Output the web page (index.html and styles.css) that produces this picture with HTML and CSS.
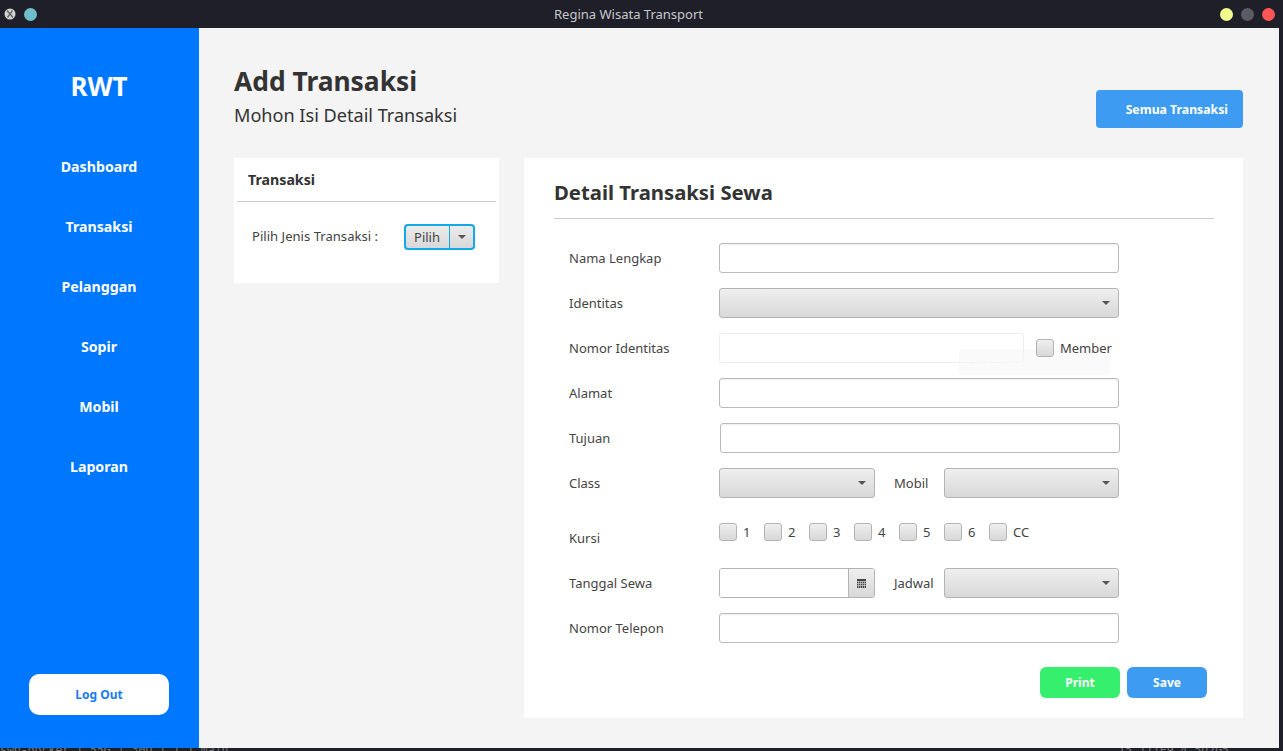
FILE: index.html
```html
<!DOCTYPE html>
<html lang="en">
<head>
  <meta charset="UTF-8">
  <title>Regina Wisata Transport</title>
  <link rel="stylesheet" href="styles.css">
</head>
<body>
  <div class="window">
    <header class="titlebar">
      <div class="title-left">
        <span class="app-icon">
          <svg width="12" height="12" viewBox="0 0 12 12">
            <circle cx="6" cy="6" r="5.5" fill="#d2d2d2"/>
            <path d="M3 2.5 L9 9.5 M8.5 2.5 L3.5 9.5" stroke="#666" stroke-width="1.4"/>
          </svg>
        </span>
        <span class="dot dot-teal"></span>
      </div>
      <div class="window-title">Regina Wisata Transport</div>
      <div class="title-right">
        <span class="dot dot-yellow"></span>
        <span class="dot dot-grey"></span>
        <span class="dot dot-red"></span>
      </div>
    </header>

    <div class="app">
      <aside class="sidebar">
        <div class="brand">RWT</div>
        <nav class="nav">
          <a class="nav-item">Dashboard</a>
          <a class="nav-item">Transaksi</a>
          <a class="nav-item">Pelanggan</a>
          <a class="nav-item">Sopir</a>
          <a class="nav-item">Mobil</a>
          <a class="nav-item">Laporan</a>
        </nav>
        <button class="logout">Log Out</button>
      </aside>

      <main class="main">
        <div class="page-head">
          <div class="page-heading">
            <h1 class="page-title">Add Transaksi</h1>
            <p class="page-sub">Mohon Isi Detail Transaksi</p>
          </div>
          <button class="btn btn-blue btn-all">Semua Transaksi</button>
        </div>

        <div class="content">
          <section class="side-card">
            <h3 class="side-title">Transaksi</h3>
            <div class="side-row">
              <span class="label">Pilih Jenis Transaksi :</span>
              <div class="split-btn">
                <span class="split-text">Pilih</span>
                <span class="split-arrow"><i class="arrow"></i></span>
              </div>
            </div>
          </section>

          <section class="form-card">
            <h2 class="form-title">Detail Transaksi Sewa</h2>
            <div class="form">
              <div class="row">
                <span class="label">Nama Lengkap</span>
                <div class="input grow"></div>
              </div>
              <div class="row">
                <span class="label">Identitas</span>
                <div class="combo grow"><i class="arrow"></i></div>
              </div>
              <div class="row">
                <span class="label">Nomor Identitas</span>
                <div class="input input-faded"></div>
                <label class="check check-member"><i class="box"></i>Member</label>
              </div>
              <div class="row">
                <span class="label">Alamat</span>
                <div class="input grow"></div>
              </div>
              <div class="row">
                <span class="label">Tujuan</span>
                <div class="input grow input-shift"></div>
              </div>
              <div class="row">
                <span class="label">Class</span>
                <div class="combo combo-small"><i class="arrow"></i></div>
                <span class="label-inline">Mobil</span>
                <div class="combo grow"><i class="arrow"></i></div>
              </div>
              <div class="row row-seats">
                <span class="label label-seats">Kursi</span>
                <div class="seats">
                  <label class="check"><i class="box"></i>1</label>
                  <label class="check"><i class="box"></i>2</label>
                  <label class="check"><i class="box"></i>3</label>
                  <label class="check"><i class="box"></i>4</label>
                  <label class="check"><i class="box"></i>5</label>
                  <label class="check"><i class="box"></i>6</label>
                  <label class="check"><i class="box"></i>CC</label>
                </div>
              </div>
              <div class="row">
                <span class="label">Tanggal Sewa</span>
                <div class="date">
                  <div class="date-text"></div>
                  <div class="date-btn">
                    <svg width="9" height="9" viewBox="0 0 9 9">
                      <rect width="9" height="9" fill="#444"/>
                      <path d="M0 2.5H9M0 4.5H9M0 6.5H9M1.5 2V9M3.5 2V9M5.5 2V9M7.5 2V9" stroke="#ccc" stroke-width=".7"/>
                    </svg>
                  </div>
                </div>
                <span class="label-inline">Jadwal</span>
                <div class="combo grow"><i class="arrow"></i></div>
              </div>
              <div class="row">
                <span class="label">Nomor Telepon</span>
                <div class="input grow"></div>
              </div>
            </div>
            <div class="form-actions">
              <button class="btn btn-green">Print</button>
              <button class="btn btn-blue">Save</button>
            </div>
          </section>
        </div>
      </main>
      <div class="ghost-tooltip">Take a New Screenshot</div>
    </div>

    <div class="status-strip">
      <span class="status-left">swp-docker | 55G | 30D | 1.1 main</span>
      <span class="status-right">15 111E9 4 5D2G5</span>
    </div>
  </div>
</body>
</html>
```
FILE: styles.css
```css
* {
  box-sizing: border-box;
}

html, body {
  margin: 0;
  height: 100%;
  overflow: hidden;
  background: #1e1f29;
}

body {
  font-family: "Noto Sans", "Open Sans", sans-serif;
  color: #333;
}

.window {
  width: 1279px;
  height: 751px;
  display: flex;
  flex-direction: column;
}

/* title bar */
.titlebar {
  height: 28px;
  flex: none;
  display: flex;
  align-items: center;
  justify-content: space-between;
  padding: 0 4px 0 4px;
  background: #1e1f29;
  position: relative;
}

.title-left, .title-right {
  display: flex;
  align-items: center;
  gap: 8px;
}

.app-icon {
  display: flex;
}

.dot {
  width: 13px;
  height: 13px;
  border-radius: 50%;
}

.dot-teal { background: #6fbfcb; }
.dot-yellow { background: #f1fa8c; }
.dot-grey { background: #5a5b66; }
.dot-red { background: #ff5555; }

.window-title {
  position: absolute;
  left: 0;
  right: 0;
  text-align: center;
  font-size: 13px;
  color: #c8c8cc;
  padding-right: 22px;
}

/* main layout */
.app {
  height: 720px;
  flex: none;
  display: flex;
  position: relative;
  background: #f4f4f4;
}

.sidebar {
  width: 199px;
  flex: none;
  background: #0077ff;
  display: flex;
  flex-direction: column;
  align-items: center;
  color: #fff;
  padding: 39px 1px 0 0;
}

.brand {
  font-size: 26px;
  font-weight: 700;
  line-height: 38px;
}

.nav {
  margin-top: 51px;
  display: flex;
  flex-direction: column;
  gap: 38px;
  align-items: center;
  flex: 1;
}

.nav-item {
  font-size: 14.2px;
  font-weight: 700;
  line-height: 22px;
}

.logout {
  width: 140px;
  height: 41px;
  margin-bottom: 33px;
  border: 0;
  border-radius: 10px;
  background: #fff;
  color: #1a7bf0;
  font: 700 12px "Noto Sans", sans-serif;
}

.main {
  flex: 1;
  padding: 35px 36px 30px 35px;
  display: flex;
  flex-direction: column;
}

.page-head {
  display: flex;
  justify-content: space-between;
  align-items: flex-start;
  height: 95px;
  flex: none;
}

.page-title {
  margin: 0;
  font-size: 26.4px;
  line-height: 36px;
  font-weight: 700;
  color: #333;
}

.page-sub {
  margin: 1px 0 0;
  font-size: 18.1px;
  line-height: 30px;
  color: #333;
}

.btn {
  height: 31px;
  width: 80px;
  border: 0;
  border-radius: 6px;
  color: #fff;
  font: 700 12px "Noto Sans", sans-serif;
}

.btn-blue { background: #3d9cf2; }
.btn-green { background: #36ef6d; }

.btn-all {
  width: 147px;
  height: 38px;
  margin-top: 27px;
  padding: 0 15px 0 0;
  text-align: right;
  border-radius: 4px;
  font-size: 12.25px;
}

.content {
  display: flex;
  gap: 25px;
  align-items: flex-start;
  flex: 1;
}

/* left card */
.side-card {
  width: 265px;
  height: 125px;
  background: #fff;
  padding: 0 3px;
}

.side-title {
  margin: 0;
  height: 44px;
  line-height: 44px;
  padding-left: 11px;
  font-size: 14.2px;
  font-weight: 700;
  border-bottom: 1px solid #ccc;
}

.side-row {
  display: flex;
  align-items: center;
  justify-content: space-between;
  padding: 22px 21px 0 15px;
}

.label, .label-inline, .check {
  font-size: 13px;
  color: #444;
}

.side-row .label {
  margin-top: -2px;
  font-size: 13.1px;
}

.split-btn {
  width: 71px;
  height: 26px;
  display: flex;
  border: 2px solid #11a9e6;
  border-radius: 4px;
  background: linear-gradient(#ececec, #d8d8d8);
  font-size: 13px;
  color: #444;
}

.split-text {
  width: 44px;
  padding-right: 1px;
  text-align: center;
  line-height: 22px;
  border-right: 1.5px solid #11a9e6;
}

.split-arrow {
  flex: 1;
  display: flex;
  align-items: center;
  justify-content: center;
}

.arrow {
  display: block;
  width: 0;
  height: 0;
  border-left: 4.5px solid transparent;
  border-right: 4.5px solid transparent;
  border-top: 4.5px solid #555;
}

/* form card */
.form-card {
  width: 719px;
  height: 560px;
  background: #fff;
  padding: 0 29px 0 30px;
  display: flex;
  flex-direction: column;
}

.form-title {
  margin: 0;
  height: 61px;
  line-height: 69px;
  font-size: 20.3px;
  font-weight: 700;
  color: #333;
  border-bottom: 1px solid #ccc;
  flex: none;
}

.form {
  padding: 24px 95px 0 15px;
  display: flex;
  flex-direction: column;
  gap: 15px;
}

.row {
  height: 30px;
  display: flex;
  align-items: center;
  position: relative;
}

.row .label {
  width: 150px;
  flex: none;
}

.grow {
  flex: 1;
}

.input {
  height: 30px;
  background: #fff;
  border: 1px solid #bbb;
  border-radius: 3px;
  box-shadow: inset 0 2px 2px -1px #eee;
}

.input-faded {
  width: 305px;
  border-color: #eee;
  box-shadow: none;
}

.input-shift {
  margin: 0 -1px 0 1px;
}

.combo {
  height: 30px;
  display: flex;
  align-items: center;
  justify-content: flex-end;
  padding-right: 8px;
  border: 1px solid #b4b4b4;
  border-radius: 3px;
  background: linear-gradient(#efefef, #d8d8d8);
}

.combo-small {
  width: 156px;
  flex: none;
}

.label-inline {
  width: 69px;
  padding-left: 19px;
  flex: none;
}

.check {
  display: flex;
  align-items: center;
  gap: 6px;
}

.check-member {
  margin-left: 12px;
  margin-top: -1px;
  position: relative;
  z-index: 2;
}

.box {
  display: block;
  width: 18px;
  height: 18px;
  border: 1px solid #b4b4b4;
  border-radius: 3px;
  background: linear-gradient(#efefef, #d8d8d8);
}

.row-seats {
  margin-top: 10px;
  height: 35px;
  align-items: flex-start;
  margin-bottom: -5px;
}

.label-seats {
  padding-top: 6px;
}

.seats {
  display: flex;
}

.seats .check {
  width: 45px;
}

.date {
  width: 156px;
  height: 30px;
  flex: none;
  display: flex;
  border: 1px solid #b4b4b4;
  border-radius: 3px;
  overflow: hidden;
}

.date-text {
  flex: 1;
  background: #fff;
}

.date-btn {
  width: 26px;
  display: flex;
  align-items: center;
  justify-content: center;
  border-left: 1px solid #b4b4b4;
  background: linear-gradient(#efefef, #d8d8d8);
}

.form-actions {
  display: flex;
  justify-content: flex-end;
  gap: 7px;
  padding: 24px 7px 0 0;
}

/* leftover tooltip from the screenshot tool, almost invisible */
.ghost-tooltip {
  position: absolute;
  left: 959px;
  top: 321px;
  width: 151px;
  height: 26px;
  line-height: 28px;
  text-align: center;
  font-size: 13px;
  color: #fbfbfb;
  background: rgba(245, 245, 245, 0.55);
  border-radius: 2px;
}

/* terminal text peeking under the window */
.status-strip {
  flex: 1;
  overflow: hidden;
  display: flex;
  justify-content: space-between;
  padding: 0 50px 0 0;
  font: 11.5px/5px "DejaVu Sans Mono", monospace;
  color: #777;
  background: #1e1f29;
}
```
